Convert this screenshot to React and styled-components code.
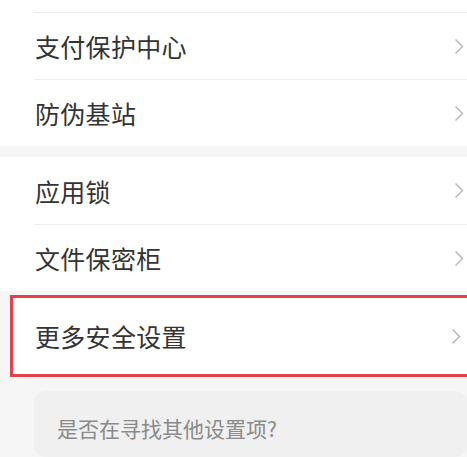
import React from "react";
import styled, { createGlobalStyle } from "styled-components";

const GlobalStyle = createGlobalStyle`
  html, body {
    margin: 0;
    padding: 0;
    background: #f6f6f6;
    font-family: "Noto Sans CJK SC", "Noto Sans", sans-serif;
    overflow: hidden;
  }
`;

const Chevron = () => (
  <svg width="10" height="17" viewBox="0 0 10 17">
    <polyline points="1.5,1.5 8.5,8.5 1.5,15.5" fill="none" stroke="#b3b3b3" strokeWidth="1.4" />
  </svg>
);

const Page = styled.div`
  width: 467px;
  height: 457px;
  display: flex;
  flex-direction: column;
  overflow: hidden;
`;

const Section = styled.div`
  background: #fff;
  margin-bottom: ${(p) => p.gap || 0}px;
`;

const Stub = styled.div`
  height: 12px;
`;

const Row = styled.div`
  height: ${(p) => p.h || 67}px;
  margin-left: ${(p) => p.inset ?? 34}px;
  padding-right: 3px;
  box-sizing: border-box;
  display: flex;
  align-items: center;
  justify-content: space-between;
  border-top: ${(p) => (p.divider ? "1px solid #ededed" : "none")};
`;

const Label = styled.span`
  font-size: 25px;
  color: #333;
  padding-left: ${(p) => p.pad || 1}px;
  letter-spacing: 0.3px;
`;

const Highlight = styled.div`
  margin-left: 10px;
  margin-right: -4px;
  border: 3px solid #e5404a;
  background: #fff;
  margin-bottom: 14px;
`;

const Hint = styled.div`
  margin-left: 34px;
  height: 90px;
  border-radius: 12px;
  background: #f0f0f0;
  padding: 22px 0 0 23px;
  box-sizing: border-box;
  font-size: 21px;
  color: #8a8a8a;
`;

const items1 = ["支付保护中心", "防伪基站"];
const items2 = ["应用锁", "文件保密柜"];

export default function App() {
  return (
    <Page>
      <GlobalStyle />
      <Section gap={11}>
        <Stub />
        {items1.map((t) => (
          <Row key={t} divider>
            <Label>{t}</Label>
            <Chevron />
          </Row>
        ))}
      </Section>
      <Section gap={4}>
        {items2.map((t, i) => (
          <Row key={t} divider={i > 0}>
            <Label>{t}</Label>
            <Chevron />
          </Row>
        ))}
      </Section>
      <Highlight>
        <Row inset={0} h={76} style={{ paddingRight: "7px" }}>
          <Label pad={22}>更多安全设置</Label>
          <Chevron />
        </Row>
      </Highlight>
      <Hint>是否在寻找其他设置项?</Hint>
    </Page>
  );
}
